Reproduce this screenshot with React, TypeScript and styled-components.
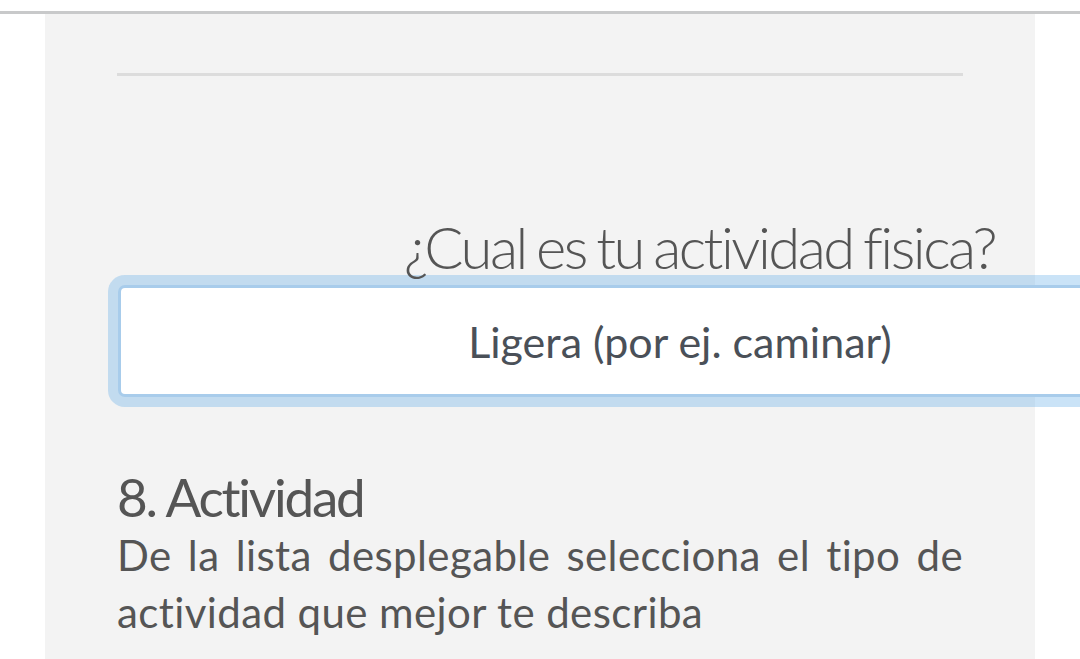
import React from "react"
import styled, { createGlobalStyle } from "styled-components"

const GlobalStyle = createGlobalStyle`
  html, body {
    margin: 0;
    padding: 0;
    background: #fff;
    overflow: hidden;
    font-family: Lato, "Open Sans", sans-serif;
    font-variant-ligatures: none;
  }
`

const TopRule = styled.div`
  margin-top: 11px;
  height: 3px;
  background: #c8c9ca;
`

const Panel = styled.main`
  box-sizing: border-box;
  margin: 0 45px;
  padding: 59px 72px 0;
  min-height: 645px;
  background: #f3f3f3;
`

const Divider = styled.hr`
  margin: 0;
  height: 3px;
  border: 0;
  background: #dcdcdc;
`

const Field = styled.div`
  margin-top: 137px;
`

const Label = styled.label`
  display: block;
  margin-right: -32px;
  text-align: right;
  font-size: 58px;
  font-weight: 300;
  line-height: 68px;
  letter-spacing: -2.5px;
  word-spacing: -3px;
  color: #555;
`

const Select = styled.select`
  display: block;
  box-sizing: border-box;
  margin: 4px 0 0 1px;
  width: 1124px;
  height: 112px;
  border: 3px solid #a8cceb;
  border-radius: 7px;
  box-shadow: 0 0 0 10px rgba(102, 175, 233, 0.35);
  background: #fff;
  appearance: none;
  outline: none;
  font-family: Lato, sans-serif;
  font-variant-ligatures: none;
  font-size: 43px;
  color: #4a5058;
  text-align: center;
  text-align-last: center;
`

const Title = styled.h2`
  margin: 70px 0 0;
  font-size: 53px;
  font-weight: 400;
  line-height: 60px;
  letter-spacing: -2.2px;
  color: #555;
`

const Text = styled.p`
  margin: 0;
  font-size: 42px;
  line-height: 57px;
  letter-spacing: 0.4px;
  text-align: justify;
  color: #555;
`

const options = [
  "Sedentaria (poco o nada)",
  "Ligera (por ej. caminar)",
  "Moderada (3-5 días por semana)",
  "Intensa (6-7 días por semana)",
]

const App = () => (
  <>
    <GlobalStyle />
    <TopRule />
    <Panel>
      <Divider />
      <Field>
        <Label htmlFor="actividad">¿Cual es tu actividad fisica?</Label>
        <Select id="actividad" defaultValue={options[1]}>
          {options.map(option => (
            <option key={option}>{option}</option>
          ))}
        </Select>
      </Field>
      <Title>8. Actividad</Title>
      <Text>
        De la lista desplegable selecciona el tipo de actividad que mejor te
        describa
      </Text>
    </Panel>
  </>
)

export default App
